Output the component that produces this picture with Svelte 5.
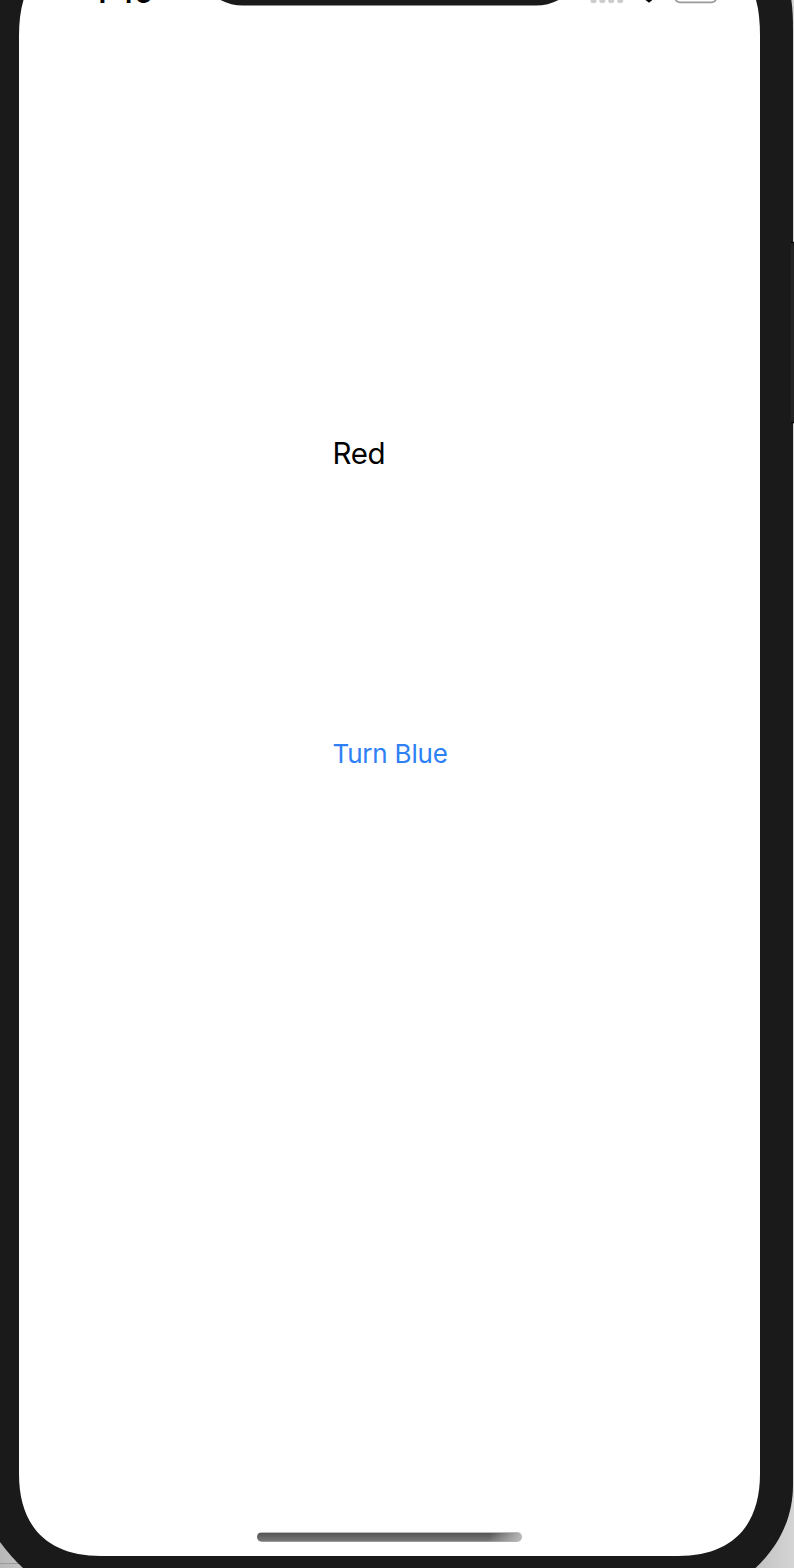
<script>
  let color = $state('Red');
  const next = $derived(color === 'Red' ? 'Blue' : 'Red');
</script>

<main class="device">
  <svg class="frame" viewBox="0 0 794 1568" aria-hidden="true">
    <defs>
      <linearGradient id="backdrop" x1="0" y1="0" x2="1" y2="0">
        <stop offset="0" stop-color="#b8b8b8" />
        <stop offset="0.04" stop-color="#c6c6c6" />
        <stop offset="0.95" stop-color="#c2c2c2" />
        <stop offset="1" stop-color="#d4d4d4" />
      </linearGradient>
    </defs>
    <rect width="794" height="1568" fill="url(#backdrop)" />
    <path d="M0 1563.5H22" stroke="#999" />
    <path d="M0 0H791.3Q793 10 793 30V1485C793 1518 779 1546 755.5 1568H23Q11 1557 0 1542Z" fill="#1a1a1a" />
    <rect x="791" y="242" width="3" height="181" fill="#242424" />
    <path d="M791 242.5h3M791 422.5h3" stroke="#000" stroke-width="1.4" />
    <path d="M23.5 0Q19 15 19 36V1474C19 1527 48 1556 101 1556H678C731 1556 760 1527 760 1474V36Q760 14 756 0H558.5Q548 5.5 536 5.5H243Q231 5.5 220.5 0Z" fill="#fff" />
  </svg>

  <div class="screen">
    <header>
      <span class="time">1<span class="colon">:</span>46</span>
      <svg class="status" width="130" height="6" viewBox="0 0 130 6" aria-hidden="true">
        <g fill="#ccc">
          <rect x=".5" y="-5" width="6" height="8" rx="2" />
          <rect x="9.3" y="-5" width="6" height="8" rx="2" />
          <rect x="18.2" y="-5" width="6" height="8" rx="2" />
          <rect x="27.2" y="-5" width="6" height="8" rx="2" />
        </g>
        <path d="M55.5 0h6.8L59 2.8Z" fill="#000" />
        <rect x="85" y="-17" width="41.5" height="19.3" rx="5" fill="none" stroke="#999" stroke-width="1.7" />
      </svg>
    </header>
    <p class="label">{color}</p>
    <button type="button" onclick={() => (color = next)}>Turn {next}</button>
    <div class="home"></div>
  </div>
</main>

<style>
  :global(body) { margin: 0; }
  .device {
    position: relative;
    width: 794px;
    height: 1568px;
    overflow: hidden;
    font-family: Inter, "Liberation Sans", sans-serif;
  }
  .frame { position: absolute; inset: 0; width: 794px; height: 1568px; }
  .screen {
    position: relative;
    display: flex;
    flex-direction: column;
    align-items: flex-start;
    box-sizing: border-box;
    width: 741px;
    height: 1556px;
    margin-left: 19px;
  }
  header {
    display: flex;
    justify-content: space-between;
    box-sizing: border-box;
    width: 100%;
    height: 6px;
    padding: 0 40px 0 75px;
  }
  .time {
    margin-top: -26px;
    height: 36px;
    line-height: 36px;
    font-size: 29.5px;
    font-weight: 600;
    letter-spacing: -0.5px;
    color: #000;
  }
  .colon { position: relative; top: -3px; }
  .label {
    margin: 427px 0 0 313.5px;
    line-height: 40px;
    font-size: 29.5px;
    letter-spacing: -0.4px;
    color: #000;
  }
  button {
    margin: 261px 0 0 313.5px;
    padding: 0;
    border: 0;
    background: none;
    font: 26px/40px Inter, "Liberation Sans", sans-serif;
    letter-spacing: -0.2px;
    color: #2f80f5;
  }
  .home {
    align-self: center;
    width: 265px;
    height: 10px;
    margin: auto 0 14px;
    border-radius: 5px;
    background:
      linear-gradient(110deg, transparent 87%, #b8b8b8 99%),
      linear-gradient(#bbb 0 1px, #555 1px, #777 9px, #999 9px);
  }
</style>
